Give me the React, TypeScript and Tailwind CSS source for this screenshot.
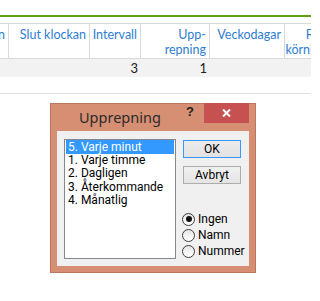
import React from "react";

const items = ["5. Varje minut", "1. Varje timme", "2. Dagligen", "3. Återkommande", "4. Månatlig"];
const radios = [
  { label: "Ingen", checked: true },
  { label: "Namn", checked: false },
  { label: "Nummer", checked: false },
];

function Radio({ checked }: { checked: boolean }) {
  return (
    <span className="w-[13px] h-[13px] rounded-full border border-[#3c3c3c] bg-gradient-to-b from-[#e6e6e6] to-white flex items-center justify-center shrink-0">
      {checked && <span className="w-[6px] h-[6px] rounded-full bg-[#111]" />}
    </span>
  );
}

export default function App() {
  return (
    <div className="relative w-[311px] h-[301px] overflow-hidden bg-white font-['Lato',sans-serif]">
      {/* page behind the dialog */}
      <div className="h-[15px]" />
      <div className="h-[2px] bg-[#5f9f12]" />
      <div className="h-[6px]" />

      <div className="ml-[-72px] w-[400px] border-t border-[#dadada]">
        <div className="grid grid-cols-[81px_81px_51px_69px_75px_58px] h-[35px] border-b border-[#dadada] text-[12.5px] leading-[15px] text-[#2e7dd1]">
          <div className="border-r border-[#dadada] text-right pr-[3px] pt-[3px] whitespace-nowrap overflow-hidden">Start klockan</div>
          <div className="border-r border-[#dadada] text-right pr-[3px] pt-[3px] whitespace-nowrap">Slut klockan</div>
          <div className="border-r border-[#dadada] text-right pr-[3px] pt-[3px] whitespace-nowrap">Intervall</div>
          <div className="border-r border-[#dadada] text-right pr-[3px] pt-[3px]">
            Upp-
            <br />
            repning
          </div>
          <div className="border-r border-[#dadada] text-right pr-[3px] pt-[3px] whitespace-nowrap">Veckodagar</div>
          <div className="text-right pr-[3px] pt-[3px] whitespace-nowrap">
            Första
            <br />
            körningen
          </div>
        </div>
        <div className="grid grid-cols-[81px_81px_51px_69px_75px_58px] h-[18px] bg-[#f2f2f2] text-[13px] leading-[18px] text-[#1c1c1c]">
          <div />
          <div />
          <div className="text-right pr-[3px]">3</div>
          <div className="text-right pr-[3px]">1</div>
          <div />
          <div />
        </div>
        <div className="h-[17px] border-b border-[#e2e2e2]" />
      </div>

      {/* dialog */}
      <div className="absolute left-[50px] top-[103px] w-[206px] h-[170px] bg-[#d68f72] border border-[#b9775b] flex flex-col">
        <div className="h-[27px] flex items-start">
          <div className="h-full flex items-center pl-[28px] text-[14.5px] text-[#2b2b2b] font-['Noto_Sans',sans-serif]">
            Upprepning
          </div>
          <div className="ml-auto w-[14px] h-[20px] flex items-center justify-center text-[13px] font-bold text-[#222] font-['Liberation_Sans',sans-serif] mt-[-2px]">
            ?
          </div>
          <div className="ml-[7px] mr-[6px] mt-[-1px] w-[45px] h-[20px] bg-[#c75050] flex items-center justify-center">
            <svg width="9" height="8" viewBox="0 0 9 8">
              <path d="M1 0.5 L8 7.5 M8 0.5 L1 7.5" stroke="white" strokeWidth="2" />
            </svg>
          </div>
        </div>

        <div className="mx-[6px] h-[135px] bg-[#f0f0f0] flex pl-[7px] pt-[8px] pb-[7px] gap-[7px] font-['Roboto',sans-serif] text-[12px] text-black">
          <div className="w-[112px] h-[120px] bg-white border border-[#828790]">
            {items.map((it, i) => (
              <div
                key={it}
                className={
                  i === 0
                    ? "ml-px mr-[1px] h-[14px] leading-[14px] pl-[2px] bg-[#3399ff] text-white"
                    : "h-[13.3px] leading-[13.3px] pl-[3px]"
                }
              >
                {it}
              </div>
            ))}
          </div>

          <div className="w-[58px] flex flex-col">
            <button className="mt-px h-[18px] w-[58px] border border-[#3399ff] bg-gradient-to-b from-[#ececec] to-[#e2e2e2] text-[12px] leading-[16px]">
              OK
            </button>
            <button className="mt-[8px] h-[18px] w-[58px] border border-[#acacac] bg-gradient-to-b from-[#f0f0f0] to-[#e5e5e5] text-[12px] leading-[16px]">
              Avbryt
            </button>
            <div className="mt-auto ml-[-1px] flex flex-col">
              {radios.map((r) => (
                <div key={r.label} className="h-[16px] flex items-center gap-[3px]">
                  <Radio checked={r.checked} />
                  <span className="leading-[16px]">{r.label}</span>
                </div>
              ))}
            </div>
          </div>
        </div>
      </div>
    </div>
  );
}
